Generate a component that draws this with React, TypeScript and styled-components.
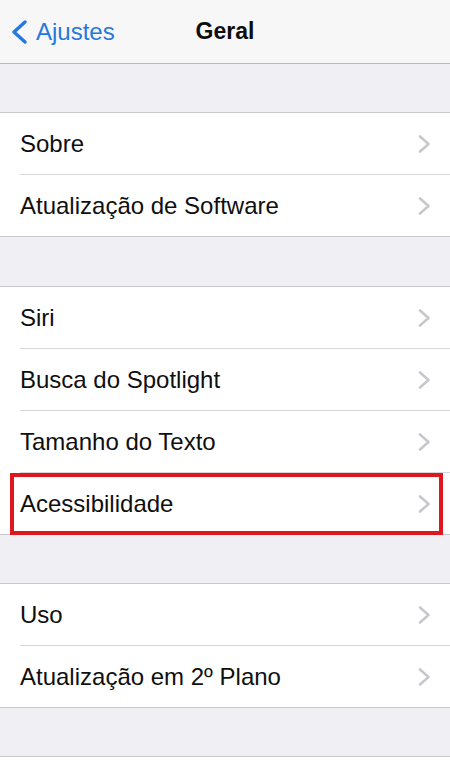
import React from "react";
import styled, { createGlobalStyle } from "styled-components";

const Global = createGlobalStyle`
  html, body {
    margin: 0;
    padding: 0;
    background: #ffffff;
  }
  body {
    font-family: "Liberation Sans", Arial, sans-serif;
    -webkit-font-smoothing: antialiased;
  }
`;

const Screen = styled.div`
  width: 450px;
  min-height: 773px;
  display: flex;
  flex-direction: column;
  background: #ffffff;
`;

const NavBar = styled.div`
  height: 63px;
  background: #f7f7f8;
  border-bottom: 1px solid #b9b9bc;
  display: grid;
  grid-template-columns: 1fr auto 1fr;
  align-items: center;
`;

const BackButton = styled.div`
  display: flex;
  align-items: center;
  gap: 8px;
  padding-left: 10px;
  color: #2479dc;
  font-size: 24px;
  line-height: 1;
`;

const Title = styled.div`
  font-size: 23px;
  font-weight: 700;
  color: #0d0d0d;
  line-height: 1;
`;

const Gap = styled.div<{ $h: number }>`
  height: ${(p) => p.$h}px;
  background: #efeff4;
`;

const Group = styled.div`
  background: #ffffff;
  border-top: 1px solid #c8c7cc;
  border-bottom: 1px solid #c8c7cc;
`;

const Row = styled.div`
  position: relative;
  height: 61px;
  display: flex;
  align-items: center;
  justify-content: space-between;
  padding: 0 19px 0 20px;
  font-size: 24px;
  color: #0f0f0f;

  & + & {
    margin-top: 1px;
  }
  & + &::before {
    content: "";
    position: absolute;
    left: 20px;
    right: 0;
    top: -1px;
    height: 1px;
    background: #d6d5da;
  }
`;

const Highlight = styled.div`
  position: absolute;
  left: 10px;
  right: 7px;
  top: 0;
  bottom: -1px;
  border: 4px solid #e0161f;
  pointer-events: none;
`;

const Chevron = () => (
  <svg width="14" height="20" viewBox="0 0 14 20">
    <polyline
      points="3,2.5 11.5,10 3,17.5"
      fill="none"
      stroke="#c7c7cc"
      strokeWidth="2.6"
      strokeLinecap="round"
      strokeLinejoin="round"
    />
  </svg>
);

const BackChevron = () => (
  <svg width="18" height="24" viewBox="0 0 18 24">
    <polyline
      points="15,2 4,12 15,22"
      fill="none"
      stroke="#2479dc"
      strokeWidth="3.4"
      strokeLinecap="round"
      strokeLinejoin="round"
    />
  </svg>
);

type Item = { label: string; marked?: boolean };

const groups: Item[][] = [
  [{ label: "Sobre" }, { label: "Atualização de Software" }],
  [
    { label: "Siri" },
    { label: "Busca do Spotlight" },
    { label: "Tamanho do Texto" },
    { label: "Acessibilidade", marked: true },
  ],
  [{ label: "Uso" }, { label: "Atualização em 2º Plano" }],
];

const gaps = [48, 49, 48];

export default function App() {
  return (
    <Screen>
      <Global />
      <NavBar>
        <BackButton>
          <BackChevron />
          <span>Ajustes</span>
        </BackButton>
        <Title>Geral</Title>
        <div />
      </NavBar>
      {groups.map((items, gi) => (
        <React.Fragment key={gi}>
          <Gap $h={gaps[gi]} />
          <Group>
            {items.map((it) => (
              <Row key={it.label}>
                <span>{it.label}</span>
                <Chevron />
                {it.marked && <Highlight />}
              </Row>
            ))}
          </Group>
        </React.Fragment>
      ))}
      <Gap $h={48} />
      <Group style={{ borderBottom: "none", flex: 1 }} />
    </Screen>
  );
}
